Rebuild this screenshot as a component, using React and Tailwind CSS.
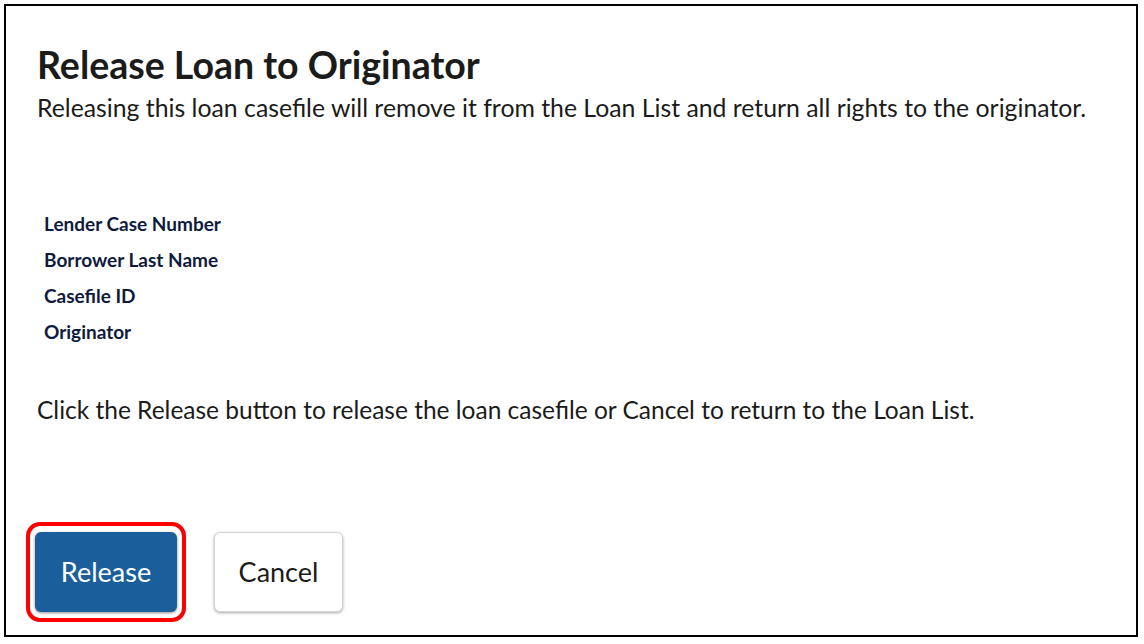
import React from "react";

const labels = [
  "Lender Case Number",
  "Borrower Last Name",
  "Casefile ID",
  "Originator",
];

const App = () => {
  return (
    <div className="w-[1144px] h-[644px] bg-white p-[4px] font-['Lato',sans-serif]">
      <div className="h-[633px] w-[1134px] border-2 border-black bg-white flex flex-col pl-[31px] pt-[37px]">
        <h1 className="text-[37.5px] leading-[44px] font-bold text-[#1b1b1b]">
          Release Loan to Originator
        </h1>
        <p className="mt-[6px] text-[24.8px] leading-[30px] text-[#1b1b1b]">
          Releasing this loan casefile will remove it from the Loan List and return all rights to the originator.
        </p>

        {/* Loan details */}
        <div className="mt-[89px] pl-[7px] flex flex-col gap-[12px]">
          {labels.map((label) => (
            <div key={label} className="text-[19px] leading-[24px] font-bold text-[#0f1b3d]">
              {label}
            </div>
          ))}
        </div>

        <p className="mt-[51px] text-[24.5px] leading-[30px] text-[#1b1b1b]">
          Click the Release button to release the loan casefile or Cancel to return to the Loan List.
        </p>

        <div className="mt-[97px] flex items-center gap-[28px] -ml-[11px]">
          <div className="rounded-[14px] border-[4px] border-[#ff0000] px-[5px] py-[6px]">
            <button className="w-[142px] h-[80px] rounded-[6px] bg-[#1a5f9c] text-white text-[27px] shadow-[0_1px_3px_rgba(0,0,0,0.45)]">
              Release
            </button>
          </div>
          <button className="w-[129px] h-[80px] rounded-[6px] bg-white border border-[#d4d4d4] text-[#1b1b1b] text-[27px] shadow-[0_1px_3px_rgba(0,0,0,0.35)]">
            Cancel
          </button>
        </div>
      </div>
    </div>
  );
};

export default App;
